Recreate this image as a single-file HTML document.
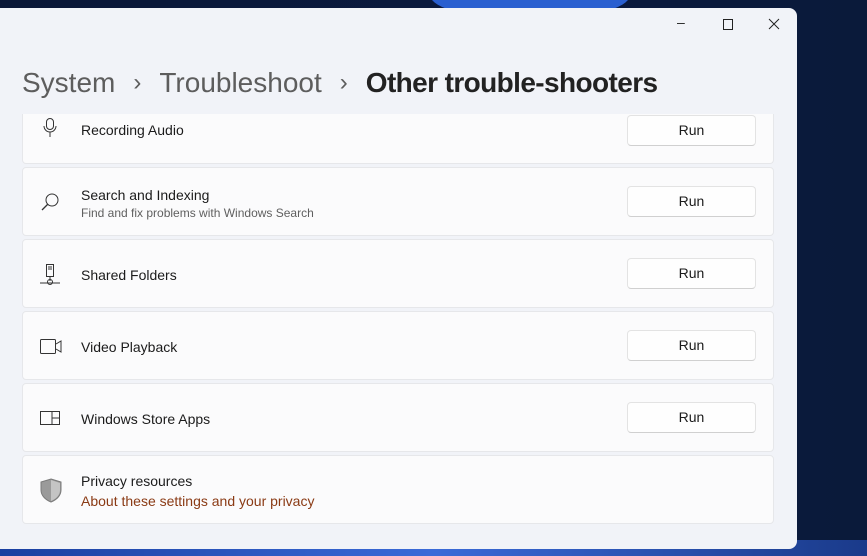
<!DOCTYPE html>
<html><head><style>
body{margin:0;width:867px;height:556px;overflow:hidden;background:linear-gradient(90deg,#0a1838 0%,#0b1a40 60%,#0a1a3a 100%);font-family:"Liberation Sans",sans-serif;position:relative}
.glow{position:absolute;left:430px;top:-30px;width:200px;height:50px;border-radius:50%;background:#2a5fd0}
.bot{position:absolute;left:0;top:540px;width:867px;height:16px;background:linear-gradient(90deg,#1a3fa0,#3a6ad8 50%,#1a3a8a)}
.win{position:absolute;left:0;top:8px;width:797px;height:541px;background:#f1f3f8;border-radius:0 8px 8px 0;overflow:hidden}
.ctl{position:absolute;top:8px;color:#222;font-size:14px}
.title{position:absolute;left:22px;top:59px;font-size:28px;color:#1a1a1a;white-space:nowrap}
.title .g{color:#5d5d5d}.title .s{color:#5d5d5d;font-size:24px;margin:0 18px 0 18px;position:relative;top:-2px}
.title b{font-weight:bold;letter-spacing:-0.6px;color:#222}
.card{position:absolute;left:22px;width:752px;background:#fbfbfc;border:1px solid #e6e7ea;border-radius:4px;box-sizing:border-box}
.card .t{position:absolute;left:58px;font-size:14px;color:#1b1b1b}
.card .d{position:absolute;left:58px;font-size:12px;color:#5f5f5f}
.run{position:absolute;left:604px;width:129px;height:31px;background:#fefefe;border:1px solid #e3e3e3;border-bottom-color:#d0d0d0;border-radius:4px;box-sizing:border-box;text-align:center;line-height:29px;font-size:14px;color:#1b1b1b}
svg{position:absolute}
</style></head><body>
<div class="glow"></div><div class="bot"></div>
<div class="win">
<div class="ctl" style="left:677px;top:6px">–</div>
<svg style="left:723px;top:11px" width="11" height="11"><rect x="0.5" y="0.5" width="9" height="10" fill="none" stroke="#222"/></svg>
<svg style="left:768px;top:10px" width="12" height="12"><path d="M1 1L11 11M11 1L1 11" stroke="#222"/></svg>
<div class="title"><span class="g">System</span><span class="s">›</span><span class="g">Troubleshoot</span><span class="s">›</span><b>Other trouble-shooters</b></div>

<div class="card" style="top:106px;height:50px;border-top:none;border-radius:0 0 4px 4px">
<svg style="left:20px;top:4px" width="14" height="20"><rect x="3.5" y="0.5" width="7" height="11" rx="3.5" fill="none" stroke="#333"/><path d="M1 8a6 6 0 0 0 12 0M7 14v5" fill="none" stroke="#333"/></svg>
<div class="t" style="top:8px">Recording Audio</div><div class="run" style="top:1px">Run</div></div>

<div class="card" style="top:159px;height:69px">
<svg style="left:18px;top:24px" width="20" height="20"><circle cx="11" cy="8" r="6" fill="none" stroke="#333"/><path d="M7 12L1 18" stroke="#333" stroke-width="1.3"/></svg>
<div class="t" style="top:19px">Search and Indexing</div><div class="d" style="top:38px">Find and fix problems with Windows Search</div>
<div class="run" style="top:18px">Run</div></div>

<div class="card" style="top:231px;height:69px">
<svg style="left:16px;top:24px" width="22" height="22"><rect x="7.5" y="0.5" width="7" height="12" fill="none" stroke="#333"/><path d="M9 3h4M9 5h4M11 13v4M1 19h20" stroke="#333"/><circle cx="11" cy="18" r="2.5" fill="none" stroke="#333"/></svg>
<div class="t" style="top:27px">Shared Folders</div><div class="run" style="top:18px">Run</div></div>

<div class="card" style="top:303px;height:69px">
<svg style="left:17px;top:27px" width="24" height="16"><rect x="0.5" y="0.5" width="15" height="14" rx="1" fill="none" stroke="#333"/><path d="M16 5L21 2V13L16 10" fill="none" stroke="#333"/></svg>
<div class="t" style="top:27px">Video Playback</div><div class="run" style="top:18px">Run</div></div>

<div class="card" style="top:375px;height:69px">
<svg style="left:17px;top:27px" width="22" height="15"><rect x="0.5" y="0.5" width="19" height="13" fill="none" stroke="#333"/><path d="M12 1v13M12 7h8" stroke="#333"/></svg>
<div class="t" style="top:27px">Windows Store Apps</div><div class="run" style="top:18px">Run</div></div>

<div class="card" style="top:447px;height:69px">
<svg style="left:17px;top:22px" width="24" height="26"><path d="M11 1L21 4V12C21 18 16 22 11 24C6 22 1 18 1 12V4Z" fill="#9a9a9a" stroke="#7a7a7a"/><path d="M11 2V23C16 21 20 17 20 12V5Z" fill="#c4c4c4"/></svg>
<div class="t" style="top:17px">Privacy resources</div>
<div class="t" style="top:37px;color:#8a3a14">About these settings and your privacy</div></div>
</div>
</body></html>
